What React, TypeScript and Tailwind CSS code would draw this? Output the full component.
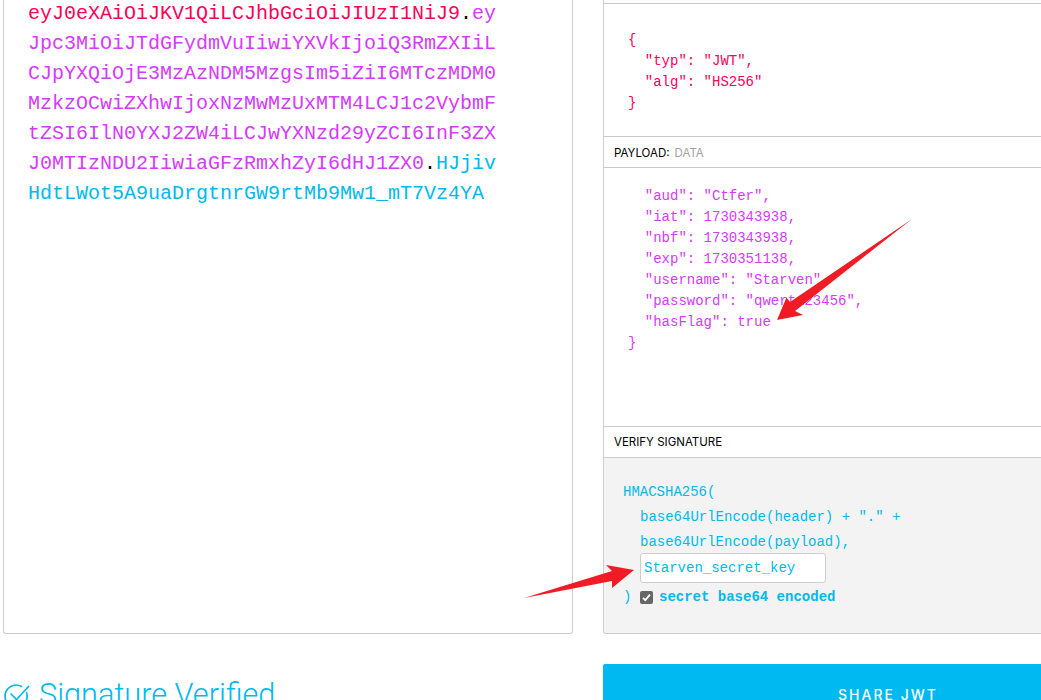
import React from "react";

const mono = "font-['Liberation_Mono','DejaVu_Sans_Mono',monospace]";
const label = "font-['Inter','Liberation_Sans',sans-serif] text-[11.5px] text-black";

export default function App() {
  return (
    <div className="relative h-[700px] w-[1041px] overflow-hidden bg-white pl-[3px]">
      <div className="flex w-[1170px] gap-[30px]">
        <div className="flex w-[570px] flex-col">
          <div className="h-[634px] overflow-hidden rounded-b-[3px] border-x border-b border-[#cccccc] pl-[24px]">
            <div className={`${mono} -mt-[1px] w-[470px] break-all text-[20px] leading-[30px]`}>
              <span className="text-[#fb015b]">eyJ0eXAiOiJKV1QiLCJhbGciOiJIUzI1NiJ9</span>
              <span className="text-black">.</span>
              <span className="text-[#d63aff]">eyJpc3MiOiJTdGFydmVuIiwiYXVkIjoiQ3RmZXIiLCJpYXQiOjE3MzAzNDM5MzgsIm5iZiI6MTczMDM0MzkzOCwiZXhwIjoxNzMwMzUxMTM4LCJ1c2VybmFtZSI6IlN0YXJ2ZW4iLCJwYXNzd29yZCI6InF3ZXJ0MTIzNDU2IiwiaGFzRmxhZyI6dHJ1ZX0</span>
              <span className="text-black">.</span>
              <span className="text-[#00b9f1]">HJjivHdtLWot5A9uaDrgtnrGW9rtMb9Mw1_mT7Vz4YA</span>
            </div>
          </div>
          <div className="mt-[43px] flex items-center gap-[8px] text-[#00b9f1]">
            <svg width="28" height="28" viewBox="0 0 28 28" fill="none" stroke="#00b9f1" strokeWidth="1.7" className="shrink-0">
              <path d="M23.5 11.5a11 11 0 1 1-5-6" strokeLinecap="round" />
              <path d="M8 13l5.5 5.5L25.5 5.5" strokeLinecap="round" strokeLinejoin="round" />
            </svg>
            <span className="font-['Roboto',sans-serif] text-[30.7px] font-light leading-[36px] whitespace-nowrap">Signature Verified</span>
          </div>
        </div>

        <div className="flex w-[570px] flex-col">
          <div className="flex h-[634px] flex-col overflow-hidden rounded-b-[3px] border-x border-b border-[#cccccc]">
            <div className="h-[4px] shrink-0 border-b border-[#cccccc]" />
            <div className={`${mono} h-[133px] shrink-0 border-b border-[#cccccc] pl-[24px] pt-[26px] text-[14px] leading-[21px] whitespace-pre text-[#fb015b]`}>
              {'{\n  "typ": "JWT",\n  "alg": "HS256"\n}'}
            </div>
            <div className={`${label} flex h-[31px] shrink-0 items-center gap-[5px] border-b border-[#cccccc] pl-[10px] pt-[3px]`}>
              <span>PAYLOAD:</span>
              <span className="text-[#a0a0a0]">DATA</span>
            </div>
            <div className={`${mono} h-[259px] shrink-0 border-b border-[#cccccc] pl-[24px] pt-[18px] text-[14px] leading-[21px] whitespace-pre text-[#d63aff]`}>
              {'  "aud": "Ctfer",\n  "iat": 1730343938,\n  "nbf": 1730343938,\n  "exp": 1730351138,\n  "username": "Starven",\n  "password": "qwert123456",\n  "hasFlag": true\n}'}
            </div>
            <div className={`${label} flex h-[31px] shrink-0 items-center border-b border-[#cccccc] pl-[10px] pt-[2px]`}>VERIFY SIGNATURE</div>
            <div className={`${mono} flex-1 bg-[#f3f3f3] pl-[19px] pt-[22px] text-[14px] leading-[25px] text-[#00b9f1]`}>
              <div>HMACSHA256(</div>
              <div className="pl-[17px]">base64UrlEncode(header) + "." +</div>
              <div className="pl-[17px]">base64UrlEncode(payload),</div>
              <div className="-mt-[2px] pl-[17px]">
                <div className="flex h-[30px] w-[186px] items-center rounded-[3px] border border-[#cccccc] bg-white pl-[3px] pt-[1px]">Starven_secret_key</div>
              </div>
              <div className="mt-[1px] flex h-[27px] items-center">
                <span className="w-[17px]">)</span>
                <span className="flex h-[13px] w-[13px] items-center justify-center rounded-[2px] bg-[#666666]">
                  <svg width="9" height="9" viewBox="0 0 9 9" fill="none" stroke="white" strokeWidth="1.8">
                    <path d="M1 4.8l2.3 2.3L8 1.6" />
                  </svg>
                </span>
                <span className="ml-[6px] font-bold">secret base64 encoded</span>
              </div>
            </div>
          </div>
          <div className="mt-[30px] flex h-[60px] items-center justify-center rounded-t-[2px] bg-[#00b9f1]">
            <span className="font-['Inter','Liberation_Sans',sans-serif] text-[14px] font-medium tracking-[2px] text-white">SHARE JWT</span>
          </div>
        </div>
      </div>

      <svg className="pointer-events-none absolute left-0 top-0" width="1041" height="700" fill="#ef1c25">
        <polygon points="912,219 795,311 803,315 777,320 786.5,297.5 790,302" />
        <polygon points="524,598 612,571 606,565 634,570 612,588 612,581" />
      </svg>
    </div>
  );
}
